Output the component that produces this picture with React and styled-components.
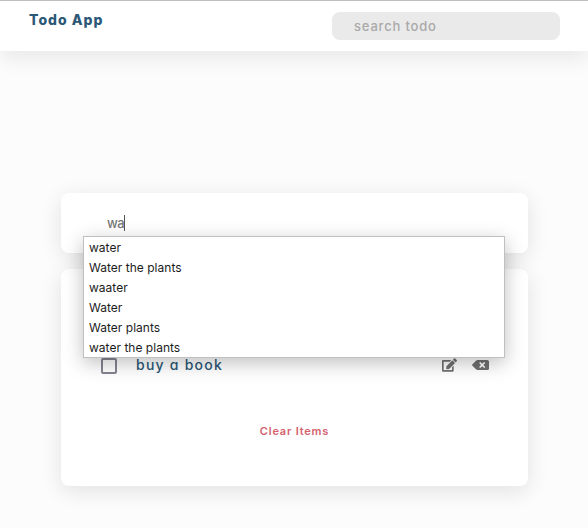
import React from "react";
import styled, { createGlobalStyle } from "styled-components";
import { FaEdit, FaBackspace } from "react-icons/fa";

const GlobalStyle = createGlobalStyle`
  * { box-sizing: border-box; }
  body {
    margin: 0;
    background: #fcfcfc;
    font-family: Inter, "Liberation Sans", sans-serif;
    overflow: hidden;
  }
`;

const Page = styled.div`
  height: 528px;
  background: #fcfcfc;
`;

const Header = styled.header`
  height: 51px;
  display: flex;
  justify-content: space-between;
  align-items: flex-start;
  padding: 11px 28px 0 29px;
  background: #fff;
  border-top: 1px solid #bebebe;
  box-shadow: 0 8px 20px rgba(0, 0, 0, 0.08);
`;

const Brand = styled.h1`
  margin: -1px 0 0;
  font-size: 14px;
  line-height: 18px;
  font-weight: 800;
  letter-spacing: 1.02px;
  color: #2b5876;
  font-feature-settings: "cv11";
`;

const Search = styled.input`
  width: 228px;
  height: 28px;
  padding: 0 22px 1px;
  border: 0;
  border-radius: 8px;
  outline: 0;
  background: #eaeaea;
  font: 500 13px Inter, sans-serif;
  letter-spacing: 0.82px;
  &::placeholder { color: #a9a9a9; opacity: 1; }
`;

const Main = styled.main`
  width: 467px;
  margin: 142px 0 0 61px;
  display: flex;
  flex-direction: column;
  gap: 16px;
`;

const Card = styled.section`
  height: ${({ $height }) => $height}px;
  background: #fff;
  border-radius: 8px;
  box-shadow: 0 5px 22px rgba(0, 0, 0, 0.11);
`;

const EntryCard = styled(Card)`
  position: relative;
  z-index: 1;
  padding: 21px 45px 0 46px;
`;

const Entry = styled.div`
  display: flex;
  align-items: center;
  height: 18px;
  font-size: 13px;
  font-weight: 500;
  letter-spacing: -0.4px;
  color: #777;
`;

const Caret = styled.span`
  width: 1px;
  height: 16px;
  background: #555;
`;

const Suggestions = styled.ul`
  position: absolute;
  top: 43px;
  left: 22px;
  width: 422px;
  height: 122px;
  margin: 0;
  padding: 1px 5px;
  list-style: none;
  background: #fff;
  border: 1px solid #c0c0c0;
  box-shadow: 0 5px 18px rgba(0, 0, 0, 0.25);
`;

const Suggestion = styled.li`
  height: 20px;
  font-size: 12px;
  line-height: 20px;
  letter-spacing: 0.02px;
  color: #1c1c1c;
`;

const ListCard = styled(Card)`
  display: flex;
  flex-direction: column;
  align-items: center;
  padding-top: 85px;
`;

const TodoRow = styled.div`
  width: 100%;
  height: 22px;
  display: flex;
  align-items: center;
  padding: 0 39px 0 40px;
`;

const Checkbox = styled.span`
  width: 16px;
  height: 16px;
  margin-top: 2px;
  border: 2px solid #858491;
  border-radius: 2px;
`;

const TodoText = styled.span`
  flex: 1;
  margin-left: 19px;
  font-size: 14px;
  line-height: 20px;
  font-weight: 500;
  letter-spacing: 1.24px;
  color: #2b5876;
  font-feature-settings: "cv11";
`;

const Actions = styled.div`
  display: flex;
  align-items: center;
  gap: 15px;
  color: #707070;
`;

const EditIcon = styled(FaEdit)`
  width: 15px;
  height: 14px;
`;

const DeleteIcon = styled(FaBackspace)`
  width: 17px;
  height: 14px;
`;

const ClearButton = styled.button`
  margin-top: 47px;
  padding: 0;
  border: 0;
  background: none;
  font: 600 11px/16px Inter, sans-serif;
  letter-spacing: 0.8px;
  color: #d3626c;
`;

const suggestions = [
  "water",
  "Water the plants",
  "waater",
  "Water",
  "Water plants",
  "water the plants",
];

export default function App() {
  return (
    <Page>
      <GlobalStyle />
      <Header>
        <Brand>Todo App</Brand>
        <Search placeholder="search todo" />
      </Header>
      <Main>
        <EntryCard $height={60}>
          <Entry>wa<Caret /></Entry>
          <Suggestions>
            {suggestions.map((text) => (
              <Suggestion key={text}>{text}</Suggestion>
            ))}
          </Suggestions>
        </EntryCard>
        <ListCard $height={217}>
          <TodoRow>
            <Checkbox />
            <TodoText>buy a book</TodoText>
            <Actions>
              <EditIcon />
              <DeleteIcon />
            </Actions>
          </TodoRow>
          <ClearButton>Clear Items</ClearButton>
        </ListCard>
      </Main>
    </Page>
  );
}
